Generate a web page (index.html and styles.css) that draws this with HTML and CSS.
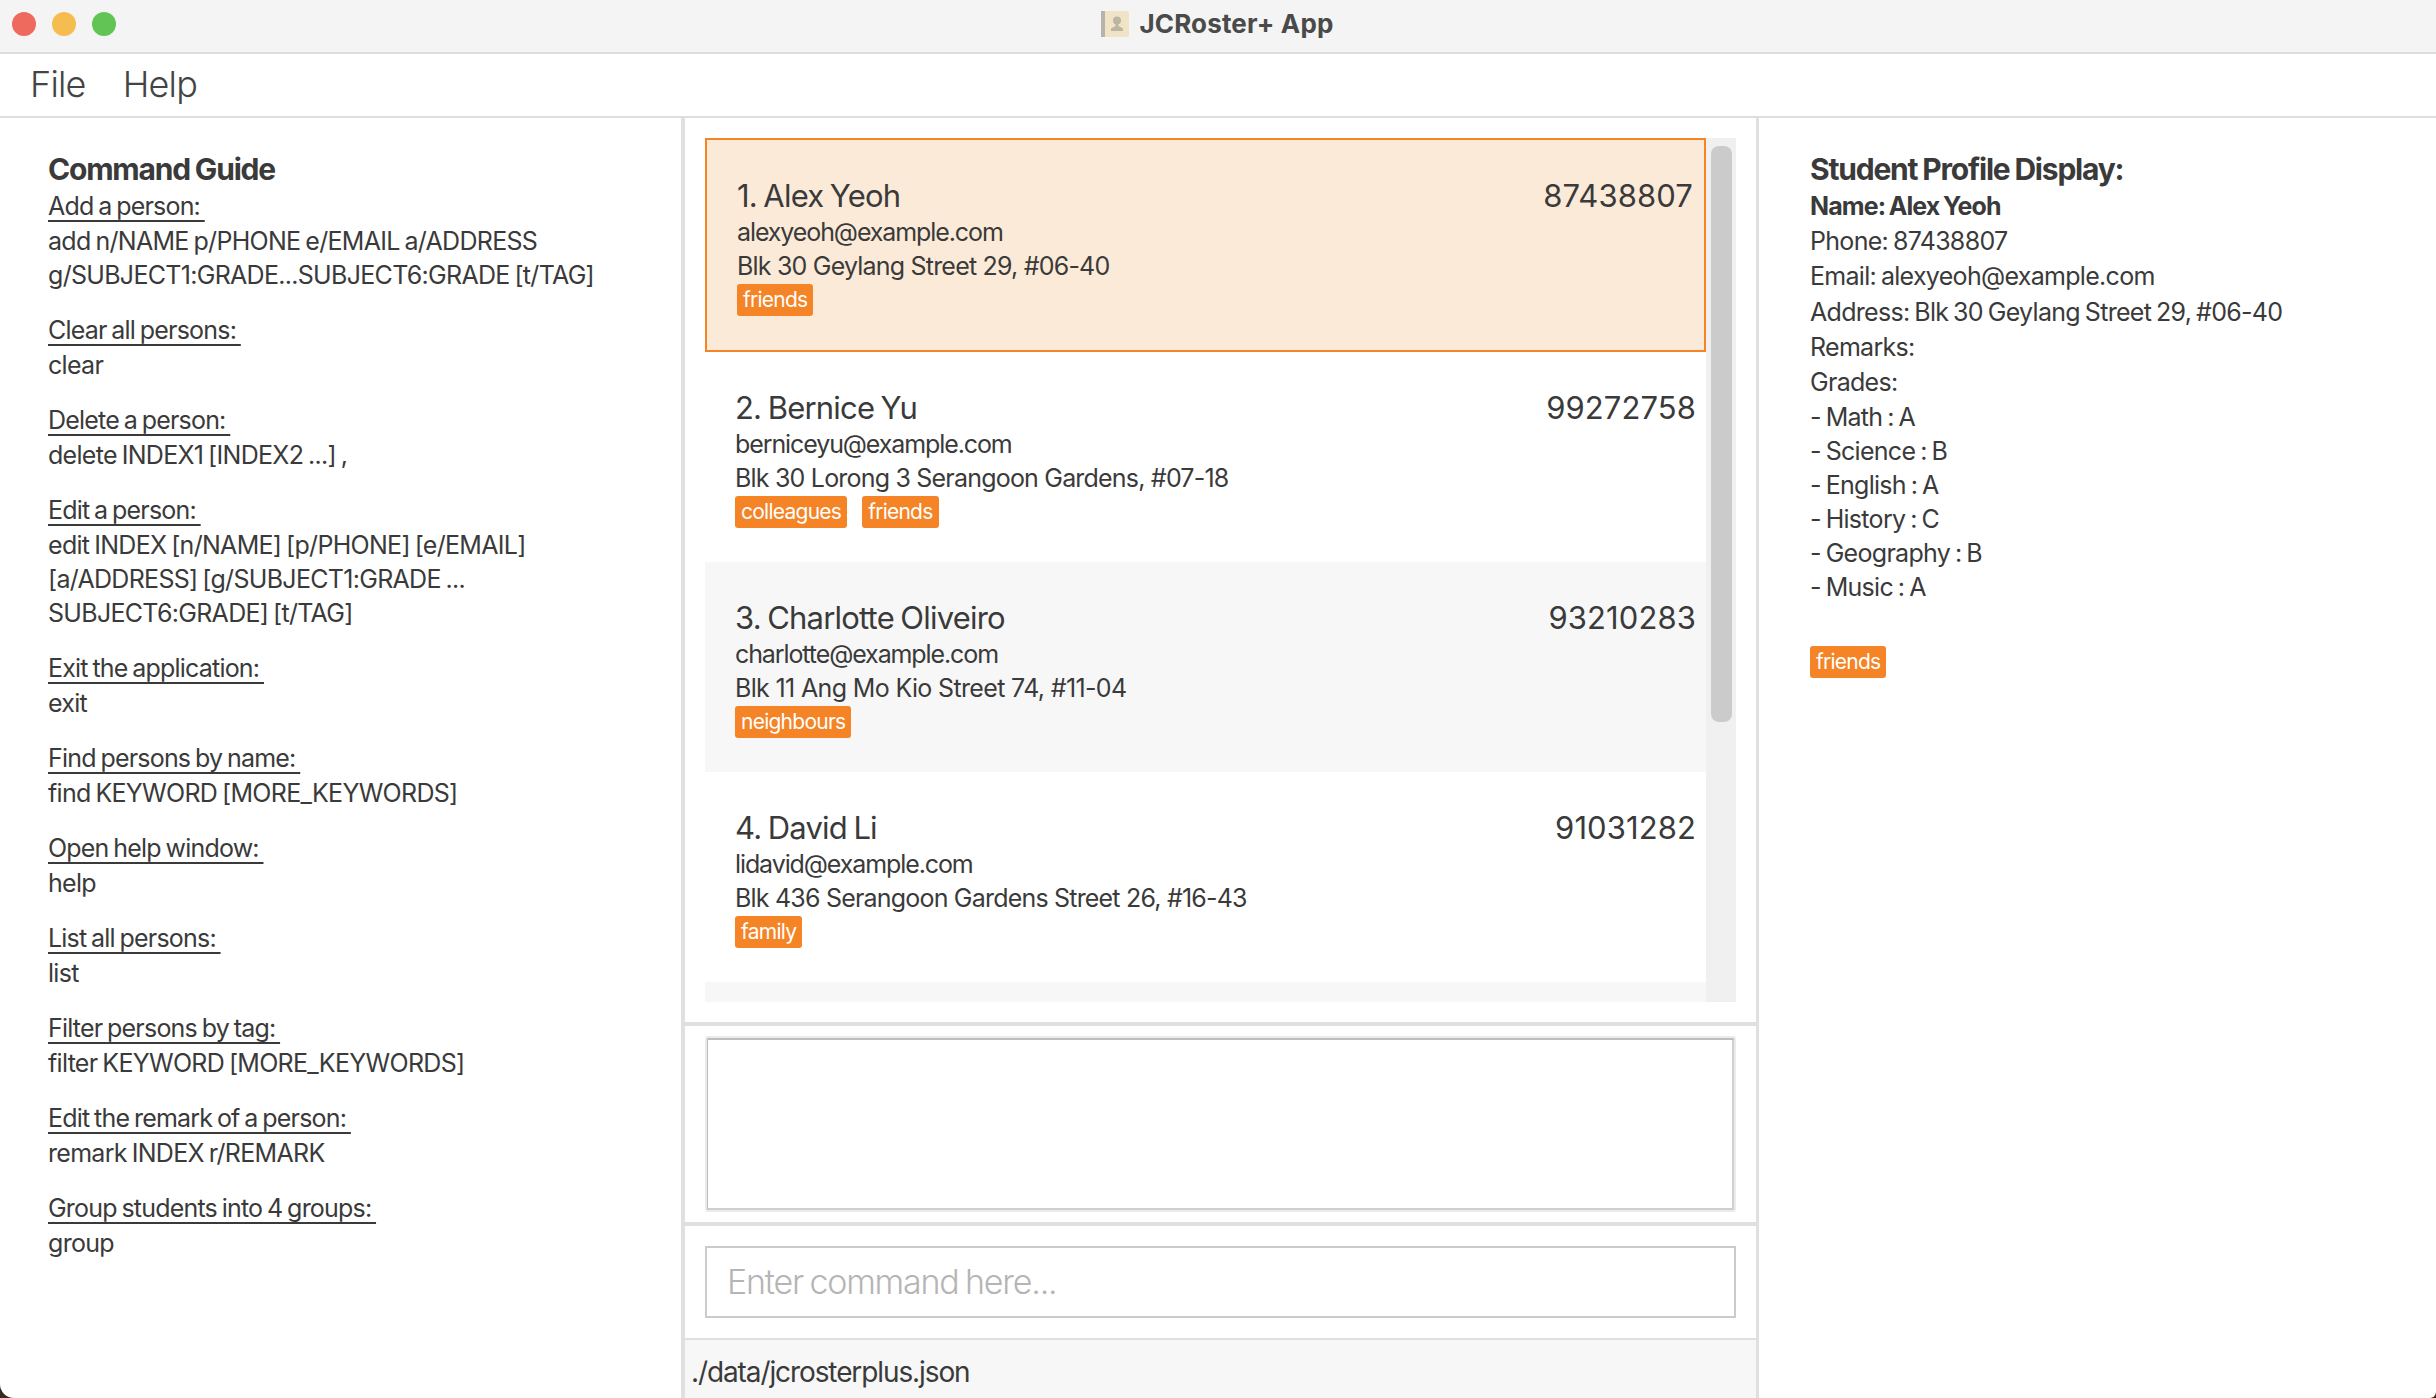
FILE: index.html
```html
<!DOCTYPE html>
<html lang="en">
<head>
<meta charset="utf-8">
<title>JCRoster+ App</title>
<link rel="stylesheet" href="styles.css">
</head>
<body>
<div class="window">
  <header class="titlebar">
    <div class="lights">
      <span class="light red"></span>
      <span class="light yellow"></span>
      <span class="light green"></span>
    </div>
    <div class="title">
      <svg class="app-icon" width="28" height="26" viewBox="0 0 28 26">
        <rect x="0" y="0" width="28" height="26" rx="1.5" fill="#f1e4c6"/>
        <rect x="0" y="0" width="4" height="26" fill="#b8b4ab"/>
        <circle cx="16" cy="9.5" r="4" fill="#bcb5a3"/>
        <path d="M14.5 13h3v2l4.5 2.5V20H10v-2.5L14.5 15z" fill="#bcb5a3"/>
      </svg>
      <span>JCRoster+ App</span>
    </div>
  </header>
  <nav class="menubar">
    <span class="menu-item">File</span>
    <span class="menu-item">Help</span>
  </nav>
  <main class="content">
    <aside class="guide">
      <h2 class="heading">Command Guide</h2>
      <section class="guide-item"><div class="guide-label">Add a person: </div><div>add n/NAME p/PHONE e/EMAIL a/ADDRESS</div><div>g/SUBJECT1:GRADE...SUBJECT6:GRADE [t/TAG]</div></section>
      <section class="guide-item"><div class="guide-label">Clear all persons: </div><div>clear</div></section>
      <section class="guide-item"><div class="guide-label">Delete a person: </div><div>delete INDEX1 [INDEX2 ...] ,</div></section>
      <section class="guide-item"><div class="guide-label">Edit a person: </div><div>edit INDEX [n/NAME] [p/PHONE] [e/EMAIL]</div><div>[a/ADDRESS] [g/SUBJECT1:GRADE ...</div><div>SUBJECT6:GRADE] [t/TAG]</div></section>
      <section class="guide-item"><div class="guide-label">Exit the application: </div><div>exit</div></section>
      <section class="guide-item"><div class="guide-label">Find persons by name: </div><div>find KEYWORD [MORE_KEYWORDS]</div></section>
      <section class="guide-item"><div class="guide-label">Open help window: </div><div>help</div></section>
      <section class="guide-item"><div class="guide-label">List all persons: </div><div>list</div></section>
      <section class="guide-item"><div class="guide-label">Filter persons by tag: </div><div>filter KEYWORD [MORE_KEYWORDS]</div></section>
      <section class="guide-item"><div class="guide-label">Edit the remark of a person: </div><div>remark INDEX r/REMARK</div></section>
      <section class="guide-item"><div class="guide-label">Group students into 4 groups: </div><div>group</div></section>
    </aside>
    <div class="center">
      <div class="list-pane">
        <div class="list">
          <div class="cards">
            <article class="card selected">
              <div class="card-top"><span class="card-name">1. Alex Yeoh</span><span class="card-phone">87438807</span></div>
              <div class="card-line card-email">alexyeoh@example.com</div>
              <div class="card-line">Blk 30 Geylang Street 29, #06-40</div>
              <div class="tags"><span class="tag">friends</span></div>
            </article>
            <article class="card">
              <div class="card-top"><span class="card-name">2. Bernice Yu</span><span class="card-phone">99272758</span></div>
              <div class="card-line card-email">berniceyu@example.com</div>
              <div class="card-line">Blk 30 Lorong 3 Serangoon Gardens, #07-18</div>
              <div class="tags"><span class="tag">colleagues</span><span class="tag">friends</span></div>
            </article>
            <article class="card alt">
              <div class="card-top"><span class="card-name">3. Charlotte Oliveiro</span><span class="card-phone">93210283</span></div>
              <div class="card-line card-email">charlotte@example.com</div>
              <div class="card-line card-line-wide">Blk 11 Ang Mo Kio Street 74, #11-04</div>
              <div class="tags"><span class="tag">neighbours</span></div>
            </article>
            <article class="card">
              <div class="card-top"><span class="card-name">4. David Li</span><span class="card-phone">91031282</span></div>
              <div class="card-line card-email">lidavid@example.com</div>
              <div class="card-line">Blk 436 Serangoon Gardens Street 26, #16-43</div>
              <div class="tags"><span class="tag">family</span></div>
            </article>
            <div class="card alt"></div>
          </div>
          <div class="scrollbar"><div class="thumb"></div></div>
        </div>
      </div>
      <div class="result-pane"><div class="result-box"></div></div>
      <div class="command-pane"><div class="command-box">Enter command here...</div></div>
      <footer class="status">./data/jcrosterplus.json</footer>
    </div>
    <aside class="profile">
      <h2 class="heading">Student Profile Display:</h2>
      <div class="profile-details">
        <div class="profile-name">Name: Alex Yeoh</div>
        <div>Phone: 87438807</div>
        <div>Email: alexyeoh@example.com</div>
        <div>Address: Blk 30 Geylang Street 29, #06-40</div>
        <div>Remarks:</div>
        <div>Grades:</div>
      </div>
      <div>- Math : A</div>
      <div>- Science : B</div>
      <div>- English : A</div>
      <div>- History : C</div>
      <div>- Geography : B</div>
      <div>- Music : A</div>
      <div class="profile-tags"><span class="tag">friends</span></div>
    </aside>
  </main>
</div>
</body>
</html>
```
FILE: styles.css
```css
* { box-sizing: border-box; }
html, body { margin: 0; padding: 0; background: #3a2a1c; }
body {
  font-family: Inter, "Liberation Sans", sans-serif;
  font-size: 25px;
  line-height: 34px;
  color: #3a3a3a;
  letter-spacing: -0.7px;
  word-spacing: -1.5px;
}
.window { width: 2436px; height: 1398px; display: flex; flex-direction: column; overflow: hidden; background: #fff; border-radius: 0 0 6px 14px; }

.titlebar {
  height: 54px; flex: none; background: #f4f4f4; border-bottom: 2px solid #dedede;
  display: flex; align-items: center; justify-content: center; padding-bottom: 4px;
}
.lights { position: absolute; left: 12px; top: 12px; display: flex; gap: 16px; }
.light { width: 24px; height: 24px; border-radius: 50%; }
.red { background: #ee6a5f; }
.yellow { background: #f5bd4f; }
.green { background: #61c454; }
.title { display: flex; align-items: center; gap: 10px; font-weight: 700; font-size: 26px; letter-spacing: 0.15px; word-spacing: 0; color: #4a4a4a; margin-left: -1px; }
.app-icon { display: block; }

.menubar {
  height: 64px; flex: none; border-bottom: 2px solid #dedede;
  display: flex; align-items: center; gap: 37px; padding: 0 0 3px 30px;
  font-size: 36px; font-weight: 300; color: #444; letter-spacing: -0.8px;
}

.content { flex: 1; display: flex; min-height: 0; }
.guide { width: 681px; flex: none; padding: 32px 0 0 48px; }
.heading { margin: 0; font-size: 30px; line-height: 39px; font-weight: 700; letter-spacing: -1.2px; word-spacing: -1px; }
.guide-item { margin-bottom: 21px; }
.guide-label { text-decoration: underline; text-underline-offset: 5px; text-decoration-thickness: 1.5px; white-space: pre; padding-bottom: 1px; letter-spacing: -0.8px; }

.center { width: 1078px; flex: none; display: flex; flex-direction: column; border-left: 4px solid #e0e0e0; border-right: 3px solid #e0e0e0; }
.list-pane { height: 904px; flex: none; padding: 20px; }
.list { height: 864px; display: flex; overflow: hidden; }
.cards { flex: 1; min-width: 0; }
.card { height: 210px; padding: 36px 10px 0 30px; background: #fff; }
.card.selected { height: 214px; background: #fbead8; border: 2px solid #f58426; padding: 36px 11px 0 30px; }
.card.alt { background: #f7f7f7; }
.card-top { display: flex; justify-content: space-between; font-size: 31px; line-height: 39px; }
.card-name { letter-spacing: -0.8px; word-spacing: -1.5px; }
.card-phone { letter-spacing: 0.1px; }
.card-line { font-size: 25px; line-height: 34px; letter-spacing: -0.8px; word-spacing: 0; }
.card-email { letter-spacing: -1.1px; }
.card-line-wide { letter-spacing: -0.65px; }
.tags { display: flex; gap: 15px; margin-top: 1px; }
.tag { background: #f58426; color: #fff; font-size: 21px; line-height: 32px; height: 32px; padding: 0 6px; border-radius: 3px; letter-spacing: -0.75px; word-spacing: 0; }
.scrollbar { width: 30px; flex: none; background: #f0f0f0; padding: 8px 4px 0 5px; }
.thumb { height: 576px; background: #cbcbcb; border-radius: 8px; }

.result-pane { height: 200px; flex: none; border-top: 4px solid #e0e0e0; padding: 10px 20px; }
.result-box { height: 176px; border: 2px solid #ebebeb; box-shadow: inset 0 2px 0 #bdbdbd, inset 1px 0 0 #bdbdbd, inset -2px 0 0 #cfcfcf, inset 0 -2px 0 #cfcfcf; border-radius: 3px; background: #fff; }
.command-pane { height: 116px; flex: none; border-top: 4px solid #e0e0e0; padding: 20px; }
.command-box { height: 72px; border: 2px solid #cbcbcb; padding-left: 20px; font-size: 34px; line-height: 67px; color: #b5b5b5; font-weight: 300; letter-spacing: -1.2px; word-spacing: -2px; }
.status { flex: 1; background: #f7f7f7; border-top: 2px solid #e0e0e0; padding: 12px 0 0 6px; font-size: 28px; line-height: 40px; letter-spacing: -1.1px; word-spacing: 0; }

.profile { flex: 1; padding: 32px 0 0 51px; }
.profile-details { line-height: 35.2px; }
.profile-name { font-weight: 700; letter-spacing: -0.9px; }
.profile-tags { display: flex; margin-top: 42px; }
```
